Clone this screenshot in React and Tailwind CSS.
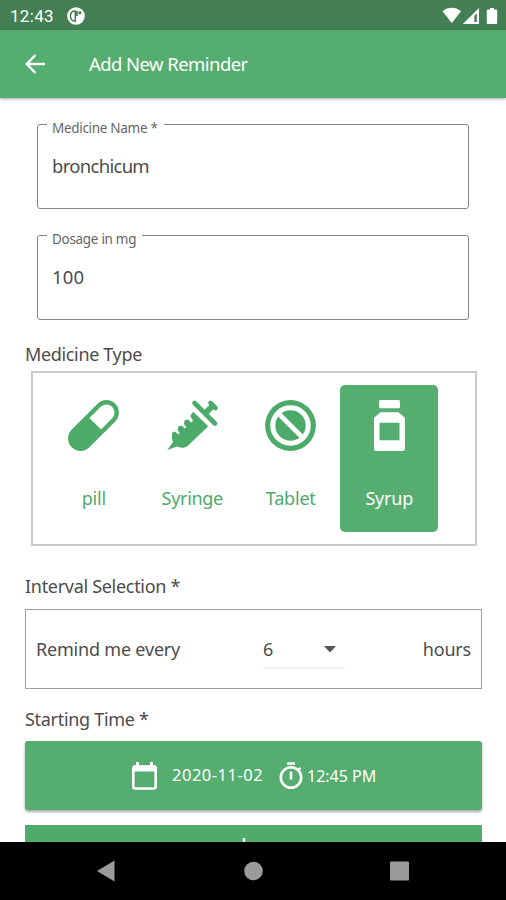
import React from 'react'
import clsx from 'clsx'

const PillIcon = () => (
  <svg width="51" height="51" viewBox="0 0 51 51">
    <path d="M12.6 38.4 38.4 12.6" stroke="currentColor" strokeWidth="25" strokeLinecap="round" />
    <path d="M21.4 18.1 32.8 6.8A8 8 0 0 1 44.2 18.2L33 29.6Z" fill="#fff" />
  </svg>
)

const SyringeIcon = () => (
  <svg width="51" height="51" viewBox="7.5 7.5 51 51" fill="none" stroke="currentColor" className="overflow-visible">
    <path d="M35 10.5 55.5 31M51 10.5l5 5" strokeWidth="4.6" strokeLinecap="round" />
    <path d="m45.5 21 8-8" strokeWidth="6" />
    <path
      d="M7.8 57.5 13.5 49.5C12.2 47 12.3 43.5 12.8 40l2.8-1 3 3 1.6-1.6-2.2-2.8 1.2-4 3.200-.4 2.800 2.800 1.800-1.600-2.600-3 .8-3.600 3.400-.8 3 3 2-1.800-2.900-4.600 3-4.400 15 14.600-20.600 19.600c-3 2.200-7.500 2.200-10.600.6Z"
      fill="currentColor"
      stroke="none"
    />
  </svg>
)

const TabletIcon = () => (
  <svg width="51" height="51" viewBox="0 0 51 51">
    <circle cx="25.5" cy="25.5" r="25.4" fill="currentColor" />
    <circle cx="25.5" cy="25.5" r="17.7" fill="none" stroke="#fff" strokeWidth="5" />
    <path d="m13.5 13.5 24 24" stroke="#fff" strokeWidth="4.6" />
  </svg>
)

const SyrupIcon = () => (
  <svg width="51" height="51" viewBox="0 0 51 51" fill="currentColor">
    <rect x="15" y="0" width="21" height="8.3" rx="1.5" />
    <path
      fillRule="evenodd"
      d="M16.5 12.3h18l6.4 5.4v31.1a2.2 2.2 0 0 1-2.2 2.2H12.2a2.2 2.2 0 0 1-2.2-2.2V17.7ZM15.5 22.8v17.4h20V22.8Z"
    />
  </svg>
)

const medicineTypes = [
  { name: 'pill', icon: PillIcon, spacing: 'tracking-[-0.2px]' },
  { name: 'Syringe', icon: SyringeIcon, spacing: 'tracking-[-0.3px]' },
  { name: 'Tablet', icon: TabletIcon, spacing: 'tracking-[-0.2px]' },
  { name: 'Syrup', icon: SyrupIcon, spacing: 'tracking-[-0.2px]' },
]

const StatusBar = () => (
  <div className="flex h-[30px] shrink-0 items-center bg-[#437f53] pl-[10px] pr-[8px] text-white">
    <span className="mt-[2px] w-[57px] font-[Roboto] text-[17px] leading-none tracking-[0.3px]">12:43</span>
    <svg width="18" height="18" viewBox="0 0 18 18" className="mt-px">
      <circle cx="9" cy="9" r="8.8" fill="#fff" />
      <path d="M8.3 4v10.2C5 14.2 3.4 11.8 3.4 9S5.200 4 8.300 4Z" fill="none" stroke="#437f53" strokeWidth="1.5" />
      <path d="M8 4h2.8v5H8ZM11.6 4.2h2.6v3h-2.6Z" fill="#437f53" />
    </svg>
    <svg width="56" height="18" viewBox="0 0 56 18" fill="#fff" className="ml-auto mt-px">
      <path d="M.5 4.200C6-.4 13.500-.4 19 4.200L9.800 16Z" />
      <path d="M37 1v16H20.8ZM34.8 6.200l-2.500 2.500V15h2.500Z" fillRule="evenodd" />
      <path d="M48 1h4v1.500h2.200a1 1 0 0 1 1 1V16a1 1 0 0 1-1 1h-8.400a1 1 0 0 1-1-1V3.500a1 1 0 0 1 1-1H48Z" />
    </svg>
  </div>
)

const AppBar = () => (
  <header className="z-10 flex h-[68px] shrink-0 items-center bg-[#55ad6f] pl-[25px] text-white shadow-[0_1px_3px_rgba(0,0,0,0.35)]">
    <svg width="21" height="20" viewBox="0 0 21 20" fill="none" stroke="#fff" strokeWidth="2.4">
      <path d="M20 10H2M10.5 1 1.7 10l8.800 9" />
    </svg>
    <h1 className="ml-[43px] text-[18.5px] tracking-[-0.57px]">Add New Reminder</h1>
  </header>
)

const Field = ({ label, value, spacing }) => (
  <fieldset className="h-[91px] rounded-[3px] border border-[#858585] px-[9px]">
    <legend className="h-[12px] pl-[5px] pr-[6px] text-[13.5px] leading-[12px] tracking-[-0.3px] text-[#666]">
      <span className="inline-block translate-y-[4px]">{label}</span>
    </legend>
    <p className={clsx('mt-[24px] pl-[5px] text-[18.5px] leading-[24px]', spacing)}>{value}</p>
  </fieldset>
)

const App = () => {
  const selected = 'Syrup'

  return (
    <div className="flex h-[900px] w-[506px] flex-col overflow-hidden bg-white font-['Noto_Sans','Open_Sans',sans-serif] text-[18px] text-[#4c4c4c]">
      <StatusBar />
      <AppBar />

      <main className="min-h-0 flex-1 overflow-hidden px-[25px] pt-[20px]">
        {/* Medicine details */}
        <div className="flex flex-col gap-[20px] pl-[12px] pr-[12px]">
          <Field label="Medicine Name *" value="bronchicum" spacing="tracking-[-0.7px]" />
          <Field label="Dosage in mg" value="100" spacing="tracking-[0.2px]" />
        </div>

        {/* Medicine type */}
        <h2 className="mt-[21px] h-[30px] leading-[26px] tracking-[-0.35px]">Medicine Type</h2>
        <div className="ml-[6px] mr-[4px] flex h-[175px] border-2 border-[#cacaca] pl-[11px] pt-[12px]">
          {medicineTypes.map((type) => {
            const Icon = type.icon
            return (
              <button
                key={type.name}
                className={clsx(
                  'flex h-[147px] w-[98.5px] flex-col items-center rounded-[5px] pl-[1px] pt-[15px]',
                  selected === type.name ? 'bg-[#55ad6f] text-white' : 'text-[#4cab69]'
                )}
              >
                <Icon />
                <span className={clsx('mt-[34px] leading-[26px]', type.spacing)}>{type.name}</span>
              </button>
            )
          })}
        </div>

        {/* Interval */}
        <h2 className="mt-[27px] h-[36px] leading-[26px] tracking-[-0.3px]">Interval Selection *</h2>
        <div className="-mr-px flex h-[80px] items-center border border-[#a0a0a0] px-[10px]">
          <span className="w-[227px] tracking-[-0.2px]">Remind me every</span>
          <div className="mt-[2px] flex h-[38px] w-[82px] items-center border-b-2 border-[#f5f5f5] pr-[9px]">
            <span>6</span>
            <svg width="12" height="7" viewBox="0 0 12 7" className="ml-auto">
              <path d="M0 0h12L6 6.5Z" fill="#555" />
            </svg>
          </div>
          <span className="ml-auto tracking-[-0.2px]">hours</span>
        </div>

        {/* Starting time */}
        <h2 className="mt-[17px] h-[35px] leading-[26px] tracking-[-0.3px]">Starting Time *</h2>
        <button className="flex h-[69px] w-[457px] items-center rounded-[3px] bg-[#55ad6f] pl-[107px] text-white shadow-[0_2px_3px_rgba(0,0,0,0.35)]">
          <svg width="25" height="28" viewBox="0 0 25 28" fill="none" stroke="#fff">
            <rect x="1.3" y="4.5" width="22.4" height="22" rx="2" strokeWidth="2.6" />
            <path d="M1 6.5h23" strokeWidth="6" />
            <path d="M5.5 0v5M19.500 0v5" strokeWidth="3" />
          </svg>
          <span className="ml-[15px] w-[107px] whitespace-nowrap text-left text-[16.5px] tracking-[0.5px]">2020-11-02</span>
          <svg width="24" height="28" viewBox="0 0 24 28" fill="none" stroke="#fff" strokeWidth="2.6">
            <circle cx="12" cy="15.5" r="10.2" />
            <path d="M8 1.5h8M12 9.500v8M18.800 8.300l2.500-2.500" />
          </svg>
          <span className="ml-[4px] whitespace-nowrap text-[16px]">12:45 PM</span>
        </button>
        <button className="mt-[15px] flex h-[69px] w-[457px] justify-center rounded-t-[1px] bg-[#4fab69] pt-[13px]">
          <svg width="22" height="22" viewBox="0 0 22 22" className="mr-[20px]" stroke="#fff" strokeWidth="2.4">
            <path d="M11 0v22M0 11h22" />
          </svg>
        </button>
      </main>

      {/* System navigation */}
      <nav className="h-[58px] shrink-0 bg-black">
        <svg width="506" height="58" viewBox="0 0 506 58" fill="#9b9b9b">
          <path d="M97 29 114.5 18.500v21Z" />
          <circle cx="253.5" cy="29" r="9.3" />
          <rect x="390" y="19.5" width="19" height="19" rx="1" />
        </svg>
      </nav>
    </div>
  )
}

export default App
